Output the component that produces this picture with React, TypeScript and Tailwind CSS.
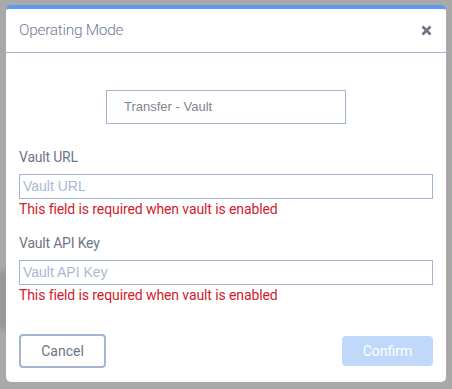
import React from "react";

export default function App() {
  const din = { fontFamily: "Roboto, 'Noto Sans', sans-serif" };
  const arial = { fontFamily: "'Liberation Sans', Arial, sans-serif" };
  return (
    <div className="w-[452px] h-[389px] bg-[#a9a9a9] pt-[5px] pl-[6px] overflow-hidden relative">
      <div className="absolute left-0 top-[270px] w-[6px] h-[60px] bg-[#8f8f8f] blur-[3px]" />
      <div className="relative w-[440px] h-[377px] bg-white rounded-[5px] border-t-[4px] border-[#5a9bf0] flex flex-col" style={din}>
        <div className="h-[44px] border-b border-[#a3b5d3] flex items-center justify-between pl-[13px] pr-[12px]">
          <span className="text-[15.5px] text-[#6f7c95] tracking-[-0.3px] font-light">Operating Mode</span>
          <svg width="11" height="11" viewBox="0 0 11 11" className="mr-[2px]">
            <path d="M1.5 1.5 L9.5 9.5 M9.5 1.5 L1.5 9.5" stroke="#6b7385" strokeWidth="2.6" strokeLinecap="butt" />
          </svg>
        </div>
        <div className="px-[13px] flex flex-col">
          <div className="mt-[37px] mx-auto w-[240px] h-[34px] border border-[#a3b5d3] flex items-center pl-[17px] text-[13px] text-[#80858f]" style={arial}>
            Transfer - Vault
          </div>
          <div className="mt-[23px] h-[20px] leading-[20px] text-[14px] text-[#6e7686] tracking-[-0.2px]">Vault URL</div>
          <div className="mt-[7px] h-[25px] border border-[#a3b5d3] flex items-center pl-[3px] text-[14px] text-[#a9b8d2]" style={arial}>
            Vault URL
          </div>
          <div className="h-[21px] leading-[21px] text-[14px] text-[#d2202c] tracking-[-0.1px]">This field is required when vault is enabled</div>
          <div className="mt-[13px] h-[20px] leading-[20px] text-[14px] text-[#6e7686] tracking-[-0.2px]">Vault API Key</div>
          <div className="mt-[7px] h-[25px] border border-[#a3b5d3] flex items-center pl-[3px] text-[14px] text-[#a9b8d2]" style={arial}>
            Vault API Key
          </div>
          <div className="h-[21px] leading-[21px] text-[14px] text-[#d2202c] tracking-[-0.1px]">This field is required when vault is enabled</div>
          <div className="mt-[28px] flex items-center justify-between">
            <div className="w-[87px] h-[34px] border-2 border-[#a3b5d3] rounded-[4px] flex items-center justify-center text-[14px] text-[#6e7686]">
              Cancel
            </div>
            <div className="w-[91px] h-[30px] bg-[#c0d8fa] rounded-[4px] flex items-center justify-center text-[14px] text-white">
              Confirm
            </div>
          </div>
        </div>
      </div>
    </div>
  );
}
